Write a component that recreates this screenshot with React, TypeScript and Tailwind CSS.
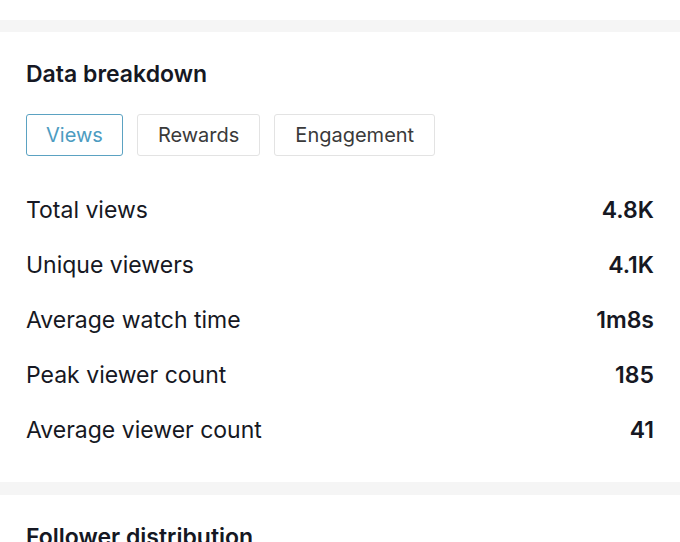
import React from "react";

const rows = [
  { label: "Total views", value: "4.8K" },
  { label: "Unique viewers", value: "4.1K" },
  { label: "Average watch time", value: "1m8s" },
  { label: "Peak viewer count", value: "185" },
  { label: "Average viewer count", value: "41" },
];

const tabs = ["Views", "Rewards", "Engagement"];

export default function App() {
  return (
    <div
      className="w-[680px] h-[542px] overflow-hidden bg-white text-[#161823]"
      style={{ fontFamily: "Inter, 'Noto Sans', sans-serif" }}
    >
      <div className="h-[20px] bg-white" />
      <div className="h-[12px] bg-[#f5f5f5]" />
      <section className="px-[26px] pt-[28px] pb-[24px]">
        <h2 className="text-[23px] font-semibold leading-[28px]">Data breakdown</h2>
        <div className="mt-[26px] flex gap-[14px]">
          {tabs.map((t, i) => (
            <button
              key={t}
              className={
                i === 0
                  ? "h-[42px] px-[19px] rounded-[3px] border-[1.5px] border-[#5ba2c2] text-[#4d9cc1] text-[20px] leading-none"
                  : "h-[42px] px-[20px] rounded-[3px] border-[1.5px] border-[#e3e3e3] text-[#3a3a3a] text-[20px] leading-none"
              }
            >
              {t}
            </button>
          ))}
        </div>
        <div className="mt-[27px] flex flex-col">
          {rows.map((r) => (
            <div key={r.label} className="h-[55px] flex items-center justify-between text-[23px]">
              <span className="text-[#161823]">{r.label}</span>
              <span className="font-semibold text-[#161823]">{r.value}</span>
            </div>
          ))}
        </div>
      </section>
      <div className="h-[13px] bg-[#f5f5f5]" />
      <section className="px-[26px] pt-[28px]">
        <h2 className="text-[23px] font-semibold leading-[28px]">Follower distribution</h2>
      </section>
    </div>
  );
}
